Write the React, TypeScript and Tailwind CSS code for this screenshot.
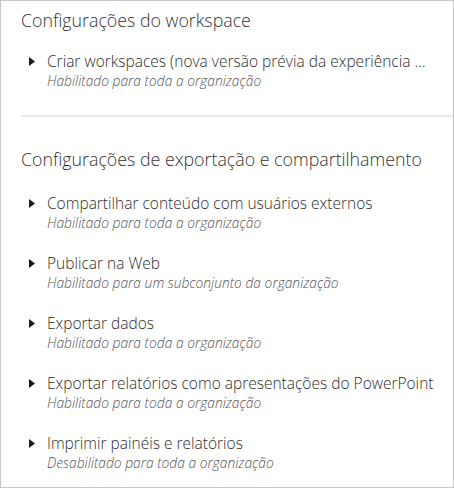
import React from "react";

const font = { fontFamily: '"Open Sans", "Noto Sans", sans-serif' };

function Caret() {
  return (
    <svg width="6" height="9" viewBox="0 0 6 9" className="shrink-0">
      <polygon points="0,0 6,4.5 0,9" fill="#1a1a1a" />
    </svg>
  );
}

function Item({ title, sub, narrow }: { title: string; sub: string; narrow?: boolean }) {
  return (
    <div className="flex items-start pl-[8px]">
      <div className="w-[18px] h-[20px] flex items-center">
        <Caret />
      </div>
      <div className={narrow ? "min-w-0 flex-1 pr-[24px]" : "min-w-0 flex-1 pr-[14px]"}>
        <div className="text-[15.5px] leading-[20px] font-[350] text-[#2e2e2e] truncate">{title}</div>
        <div className="text-[13.8px] leading-[20px] font-light italic text-[#555555] truncate">{sub}</div>
      </div>
    </div>
  );
}

export default function App() {
  return (
    <div
      className="w-[454px] h-[488px] border border-[#c6c6c6] bg-white overflow-hidden box-border"
      style={font}
    >
      <div className="pl-[20px] pt-[7px]">
        <div className="text-[17.8px] leading-[24px] font-light text-[#333333]">
          Configurações do workspace
        </div>
        <div className="mt-[19px]">
          <Item
            narrow
            title="Criar workspaces (nova versão prévia da experiência de workspace)"
            sub="Habilitado para toda a organização"
          />
        </div>
        <div className="mt-[24px] h-[2px] bg-[#eaeaea]" />
        <div className="mt-[30px] text-[17.8px] leading-[24px] font-light text-[#333333]">
          Configurações de exportação e compartilhamento
        </div>
        <div className="mt-[22px] flex flex-col gap-[20px]">
          <Item title="Compartilhar conteúdo com usuários externos" sub="Habilitado para toda a organização" />
          <Item title="Publicar na Web" sub="Habilitado para um subconjunto da organização" />
          <Item title="Exportar dados" sub="Habilitado para toda a organização" />
          <Item title="Exportar relatórios como apresentações do PowerPoint" sub="Habilitado para toda a organização" />
          <Item title="Imprimir painéis e relatórios" sub="Desabilitado para toda a organização" />
        </div>
      </div>
    </div>
  );
}
